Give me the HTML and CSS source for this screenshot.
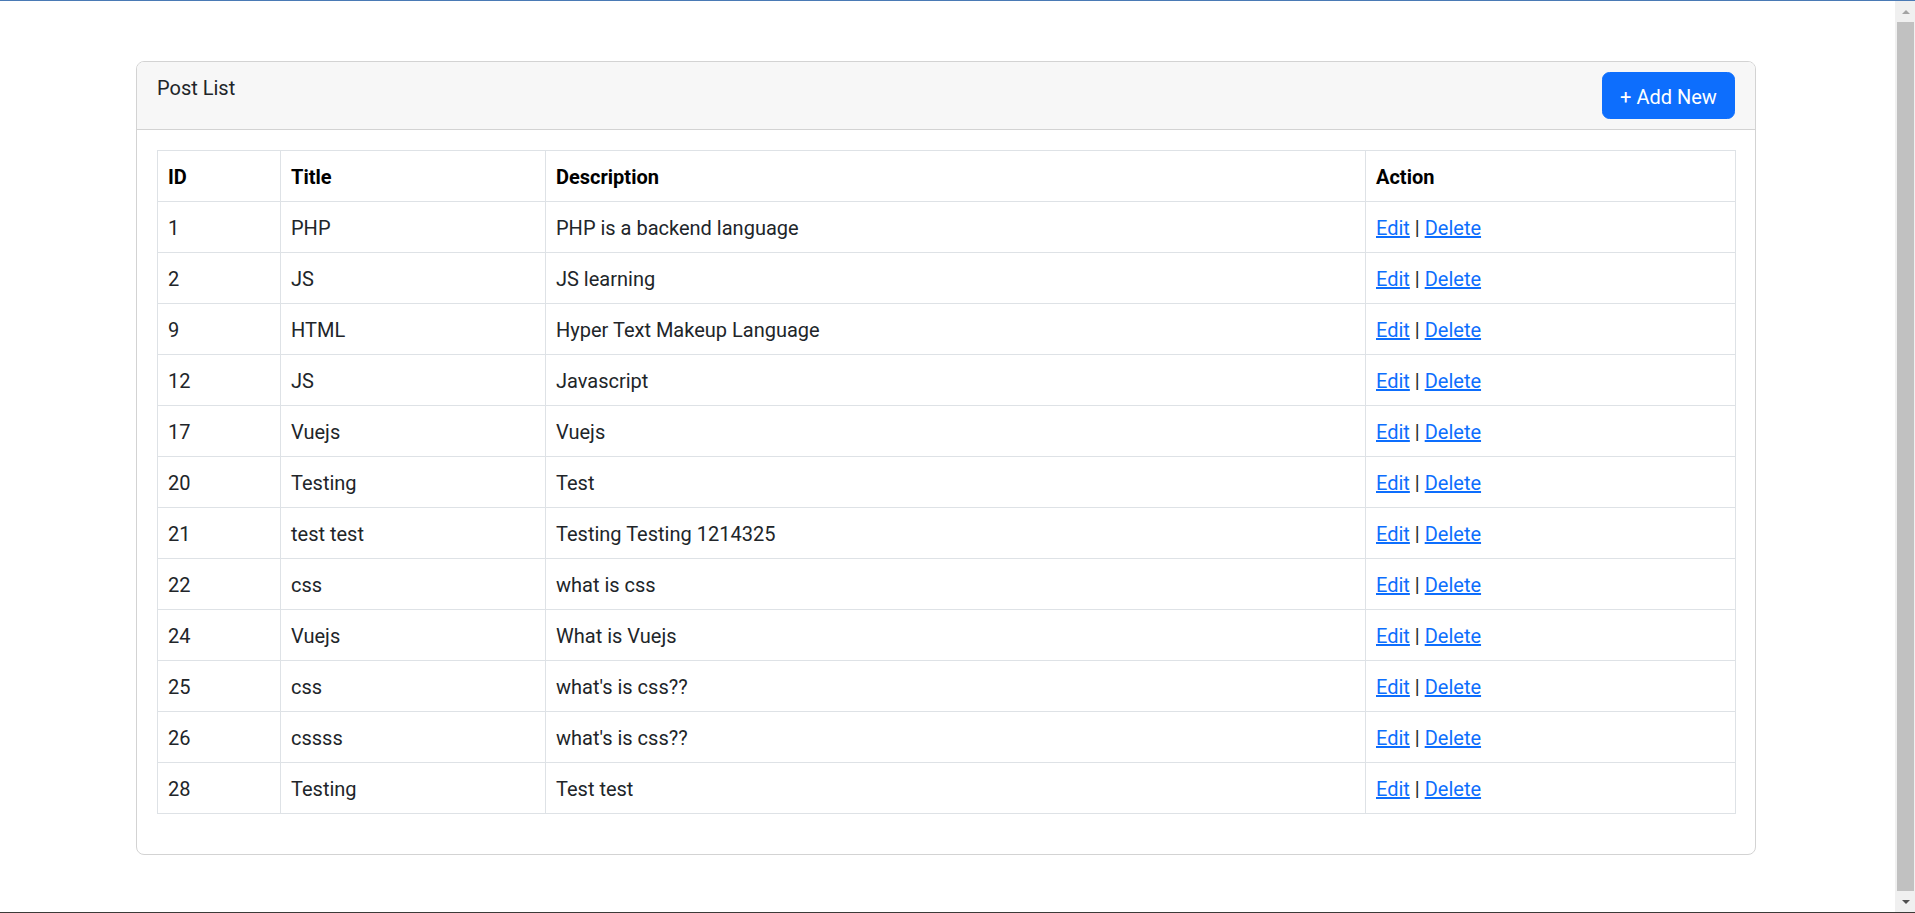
FILE: index.html
```html
<!DOCTYPE html>
<html lang="en">
<head>
<meta charset="utf-8">
<title>Post List</title>
<link rel="stylesheet" href="styles.css">
</head>
<body>
<div class="frame">
  <main class="page">
    <div class="container">
      <div class="card">
        <div class="card-header">
          <span class="card-title">Post List</span>
          <a class="btn-primary" href="#">+ Add New</a>
        </div>
        <div class="card-body">
          <table class="table">
            <colgroup>
              <col class="c-id"><col class="c-title"><col class="c-desc"><col class="c-action">
            </colgroup>
            <thead>
              <tr><th>ID</th><th>Title</th><th>Description</th><th>Action</th></tr>
            </thead>
            <tbody>
              <tr><td>1</td><td>PHP</td><td>PHP is a backend language</td><td><a href="#">Edit</a> | <a href="#">Delete</a></td></tr>
              <tr><td>2</td><td>JS</td><td>JS learning</td><td><a href="#">Edit</a> | <a href="#">Delete</a></td></tr>
              <tr><td>9</td><td>HTML</td><td>Hyper Text Makeup Language</td><td><a href="#">Edit</a> | <a href="#">Delete</a></td></tr>
              <tr><td>12</td><td>JS</td><td>Javascript</td><td><a href="#">Edit</a> | <a href="#">Delete</a></td></tr>
              <tr><td>17</td><td>Vuejs</td><td>Vuejs</td><td><a href="#">Edit</a> | <a href="#">Delete</a></td></tr>
              <tr><td>20</td><td>Testing</td><td>Test</td><td><a href="#">Edit</a> | <a href="#">Delete</a></td></tr>
              <tr><td>21</td><td>test test</td><td>Testing Testing 1214325</td><td><a href="#">Edit</a> | <a href="#">Delete</a></td></tr>
              <tr><td>22</td><td>css</td><td>what is css</td><td><a href="#">Edit</a> | <a href="#">Delete</a></td></tr>
              <tr><td>24</td><td>Vuejs</td><td>What is Vuejs</td><td><a href="#">Edit</a> | <a href="#">Delete</a></td></tr>
              <tr><td>25</td><td>css</td><td>what's is css??</td><td><a href="#">Edit</a> | <a href="#">Delete</a></td></tr>
              <tr><td>26</td><td>cssss</td><td>what's is css??</td><td><a href="#">Edit</a> | <a href="#">Delete</a></td></tr>
              <tr><td>28</td><td>Testing</td><td>Test test</td><td><a href="#">Edit</a> | <a href="#">Delete</a></td></tr>
            </tbody>
          </table>
        </div>
      </div>
    </div>
  </main>
  <div class="scrollbar">
    <div class="sb-btn"><span class="arrow-up"></span></div>
    <div class="sb-thumb"></div>
    <div class="sb-btn sb-btn-down"><span class="arrow-down"></span></div>
  </div>
</div>
</body>
</html>
```

FILE: styles.css
```css
html, body {
  margin: 0;
  padding: 0;
}

body {
  height: 913px;
  box-sizing: border-box;
  border-top: 1px solid #4a7ab5;
  border-bottom: 1px solid #3c3a38;
  background: #ffffff;
  font-family: Roboto, "Liberation Sans", sans-serif;
  font-size: 20px;
  line-height: 30px;
  color: #212529;
  overflow: hidden;
}

.frame {
  display: flex;
  height: 911px;
}

.page {
  flex: 1;
  overflow: hidden;
}

.container {
  width: 1620px;
  margin: 60px 0 0 136px;
}

.card {
  border: 1px solid #d3d3d3;
  border-radius: 8px;
  background: #ffffff;
  overflow: hidden;
}

.card-header {
  display: flex;
  justify-content: space-between;
  align-items: flex-start;
  padding: 10px 20px;
  background: #f7f7f7;
  border-bottom: 1px solid #d3d3d3;
}

.card-title {
  color: #212529;
  padding-top: 1px;
}

.btn-primary {
  display: block;
  box-sizing: border-box;
  width: 133px;
  height: 47px;
  padding: 8.5px 0 6.5px;
  text-align: center;
  border: 1px solid #0d6efd;
  border-radius: 7.5px;
  background: #0d6efd;
  color: #ffffff;
  text-decoration: none;
}

.card-body {
  padding: 20px;
}

.table {
  width: 100%;
  table-layout: fixed;
  border-collapse: collapse;
  margin-bottom: 20px;
  color: #212529;
}

.c-id { width: 123px; }
.c-title { width: 265px; }
.c-desc { width: 820px; }
.c-action { width: 370px; }

.table th,
.table td {
  border: 1px solid #dee2e6;
  padding: 11px 10px 9px;
  text-align: left;
  vertical-align: top;
  white-space: nowrap;
}

.table th {
  font-weight: 700;
  color: #000000;
}

.table a {
  color: #0d6efd;
  text-decoration: underline;
}

.scrollbar {
  width: 20px;
  display: flex;
  flex-direction: column;
  background: #f0f0f0;
}

.sb-btn {
  height: 21px;
  display: flex;
  align-items: center;
  justify-content: center;
  padding-left: 2px;
}

.sb-btn-down {
  height: 21px;
}

.sb-thumb {
  flex: 1;
  margin-left: 2px;
  margin-right: 1px;
  background: #c1c1c1;
}

.arrow-up {
  width: 0;
  height: 0;
  border-left: 4px solid transparent;
  border-right: 4px solid transparent;
  border-bottom: 4px solid #a3a3a3;
}

.arrow-down {
  width: 0;
  height: 0;
  border-left: 4px solid transparent;
  border-right: 4px solid transparent;
  border-top: 4px solid #505050;
}
```
